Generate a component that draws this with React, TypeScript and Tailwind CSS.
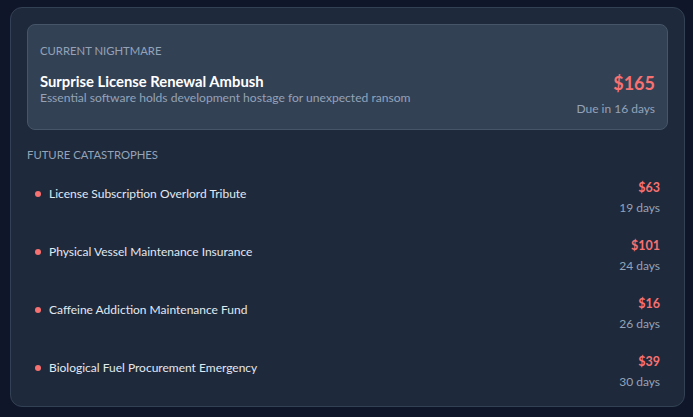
import React from 'react'

type Catastrophe = {
  name: string
  cost: number
  days: number
}

const current = {
  title: 'Surprise License Renewal Ambush',
  description: 'Essential software holds development hostage for unexpected ransom',
  cost: 165,
  days: 16,
}

const future: Catastrophe[] = [
  { name: 'License Subscription Overlord Tribute', cost: 63, days: 19 },
  { name: 'Physical Vessel Maintenance Insurance', cost: 101, days: 24 },
  { name: 'Caffeine Addiction Maintenance Fund', cost: 16, days: 26 },
  { name: 'Biological Fuel Procurement Emergency', cost: 39, days: 30 },
]

export default function App() {
  return (
    <div
      className="min-h-screen w-full bg-[#0f1629] pt-[7px] pl-[10px] pr-[8px]"
      style={{ fontFamily: 'Lato, "Noto Sans", sans-serif' }}
    >
      <div className="h-[400px] rounded-xl border border-[#334155] bg-[#1e293b] px-4 pt-4 pb-[7px]">
        {/* Current nightmare */}
        <div className="mb-[15px] rounded-lg border border-[#475569] bg-[#334155] px-3 pt-4 pb-3">
          <div className="mb-[10px] text-[11.3px] leading-5 uppercase text-[#94a3b8]">Current Nightmare</div>
          <div className="flex items-start justify-between">
            <div>
              <div className="mt-px text-[14.8px] font-bold leading-[18px] text-white">{current.title}</div>
              <div className="-mt-px text-[12.1px] leading-[18px] text-[#94a3b8]">{current.description}</div>
            </div>
            <div className="-mt-[2px] text-right">
              <div className="text-[18px] font-bold leading-7 text-[#f87171]">${current.cost}</div>
              <div className="mt-1 text-[12px] leading-4 text-[#94a3b8]">Due in {current.days} days</div>
            </div>
          </div>
        </div>

        {/* Future list */}
        <div className="mb-[5px] text-[11.3px] leading-5 uppercase text-[#94a3b8]">Future Catastrophes</div>
        <div className="flex flex-col gap-[2px]">
          {future.map((item) => (
            <div key={item.name} className="flex items-center justify-between px-2 py-2">
              <div className="mb-[8px] flex items-center gap-2">
                <span className="h-1.5 w-1.5 rounded-full bg-[#f87171]" />
                <span className="text-[12px] text-[#e2e8f0]">{item.name}</span>
              </div>
              <div className="text-right">
                <div className="text-[12.5px] font-bold leading-5 text-[#f87171]">${item.cost}</div>
                <div className="text-[12px] leading-5 text-[#94a3b8]">{item.days} days</div>
              </div>
            </div>
          ))}
        </div>
      </div>
    </div>
  )
}
